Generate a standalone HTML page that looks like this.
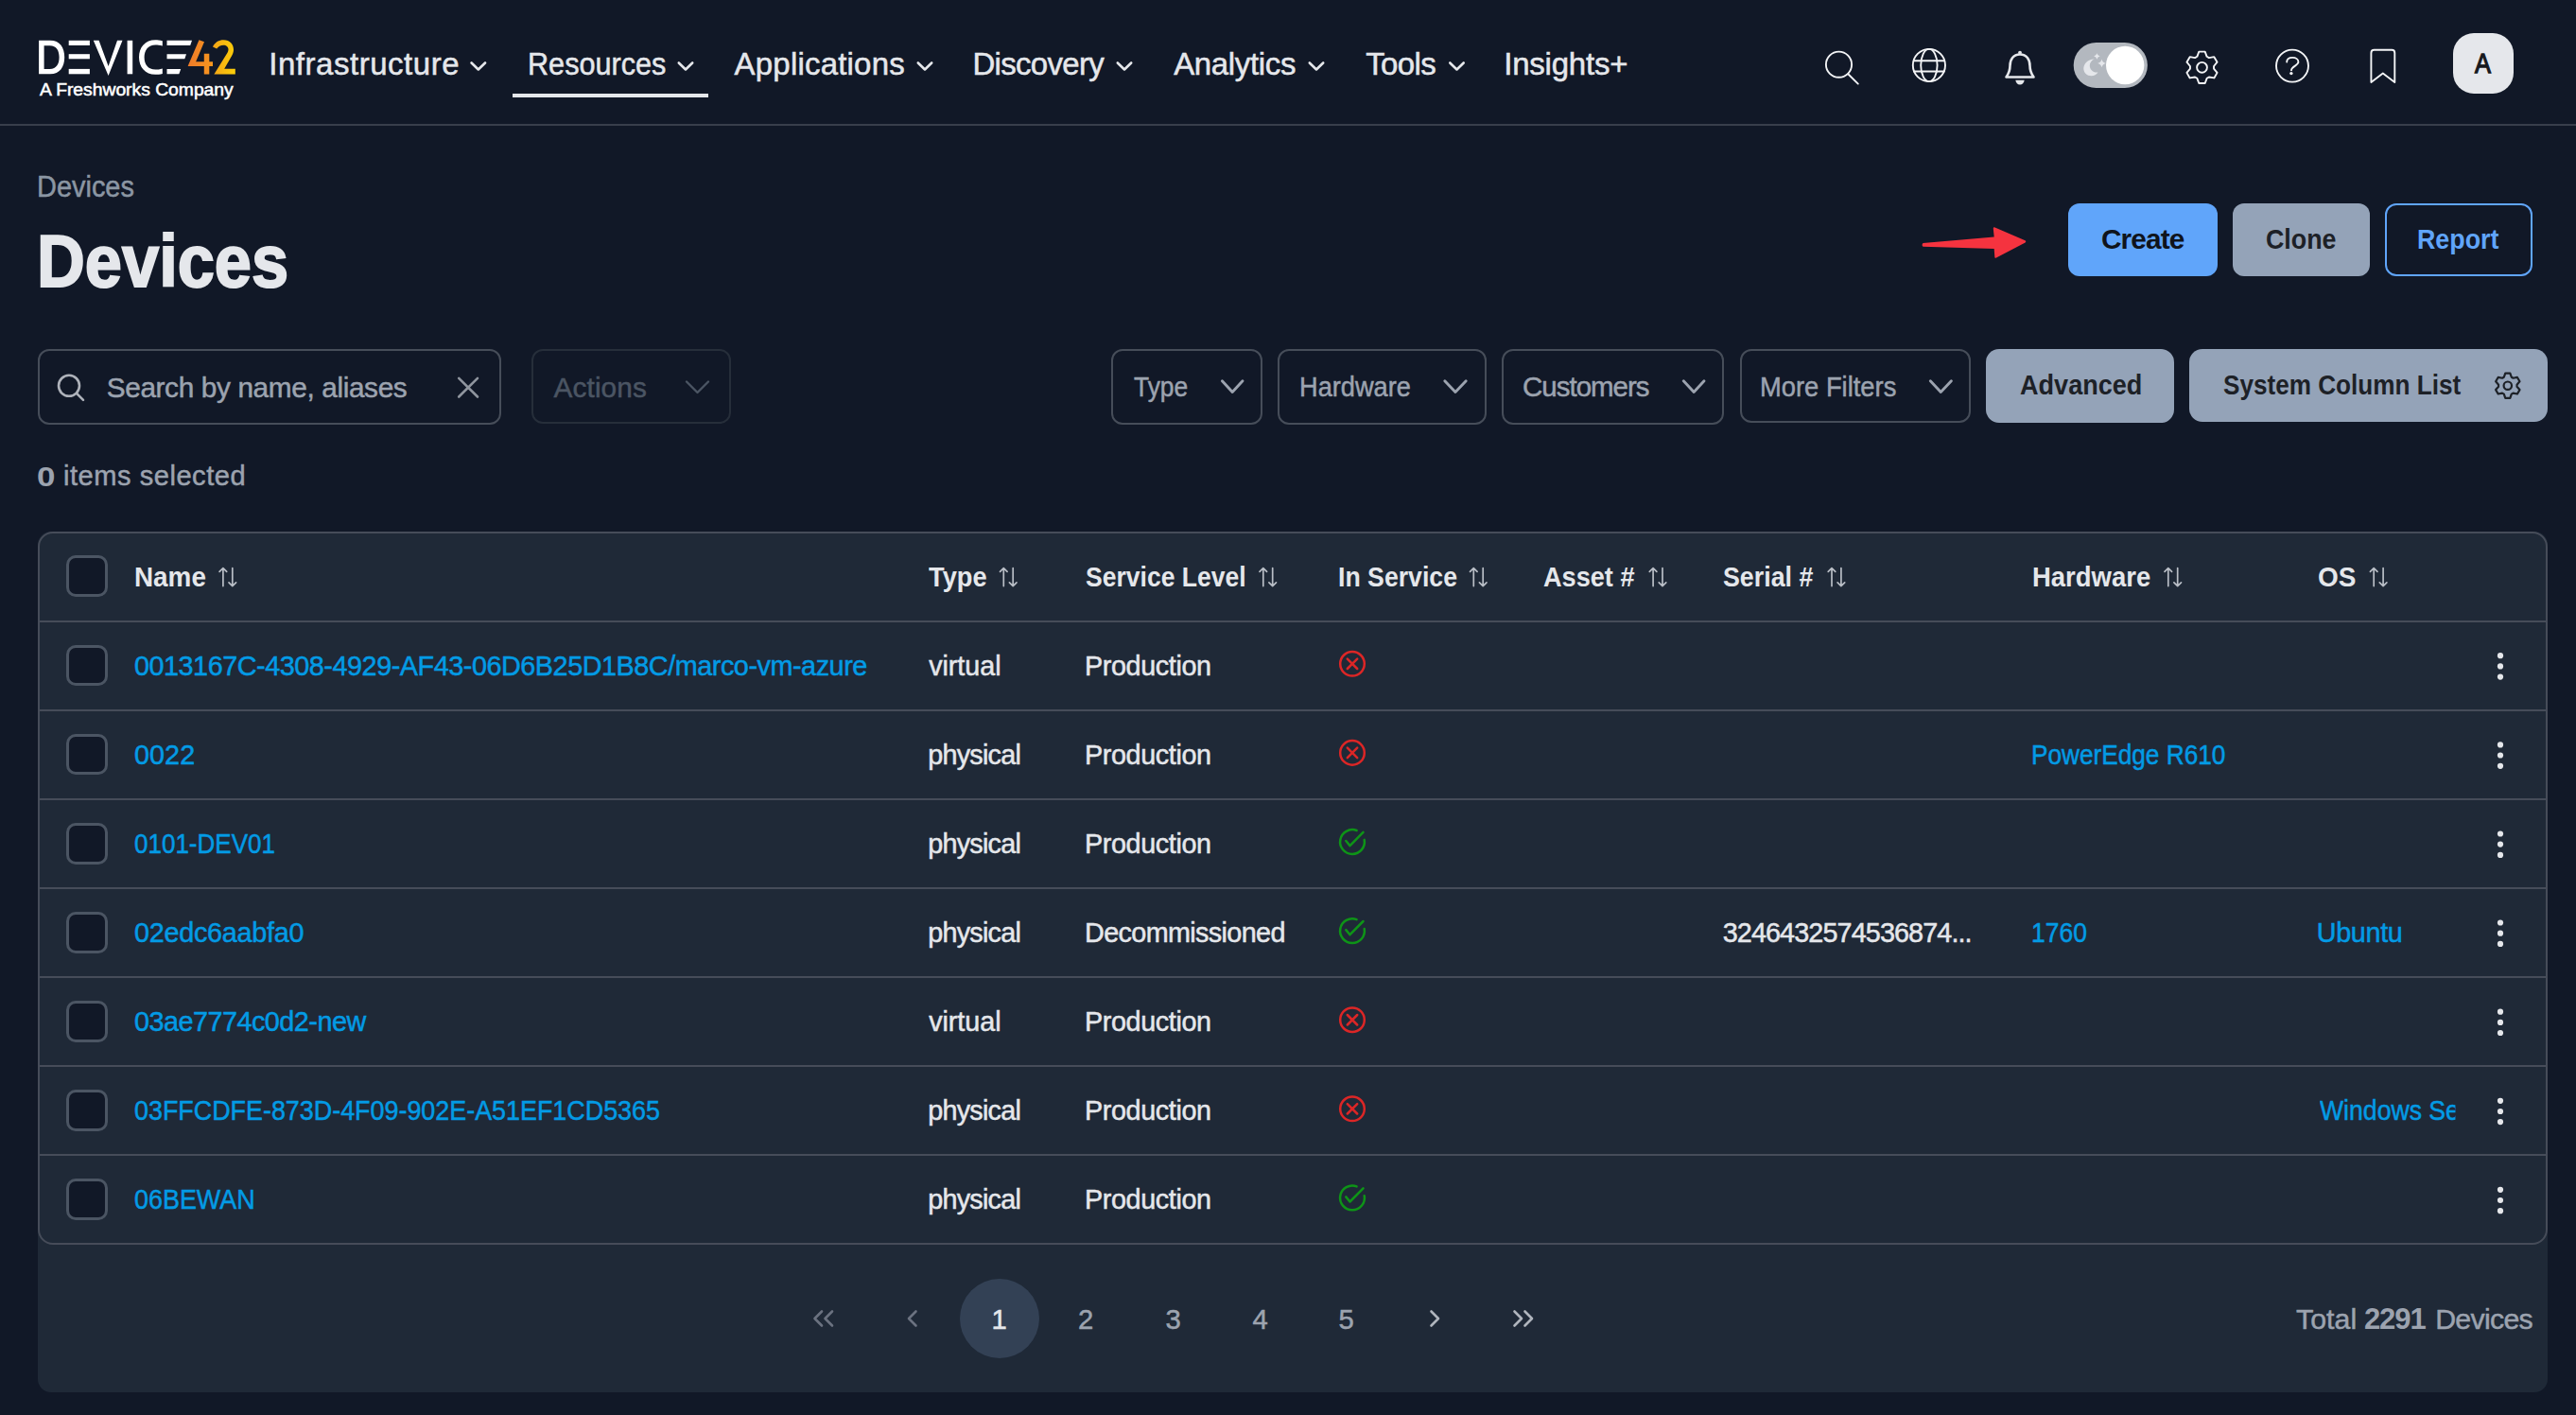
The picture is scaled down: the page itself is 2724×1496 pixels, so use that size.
<!DOCTYPE html>
<html><head><meta charset="utf-8"><title>Devices</title>
<style>
html,body{margin:0;padding:0;}
body{width:2724px;height:1496px;background:#111827;position:relative;overflow:hidden;font-family:"Liberation Sans",sans-serif;}
.t{position:absolute;white-space:nowrap;line-height:1;transform-origin:0 0;}
@media (max-width:2000px){html{zoom:0.5;}}
</style></head><body>
<div style="position:absolute;left:0px;top:131px;width:2724px;height:2px;background:#383e4b;"></div>
<svg style="position:absolute;left:0;top:0" width="300" height="130" viewBox="0 0 300 130">
<defs><linearGradient id="lg42" gradientUnits="userSpaceOnUse" x1="198" y1="0" x2="250" y2="0"><stop offset="0" stop-color="#ee7a2a"/><stop offset="0.5" stop-color="#f7951e"/><stop offset="0.56" stop-color="#f5a816"/><stop offset="1" stop-color="#fcd108"/></linearGradient></defs>
<g fill="#ffffff">
<path d="M41.1,42.8 H53 C63.5,42.8 68.2,50.5 68.2,60.5 C68.2,70.5 63.5,78.3 53,78.3 H41.1 Z M46.6,48.2 V72.9 H52.6 C59.8,72.9 62.6,67.5 62.6,60.5 C62.6,53.5 59.8,48.2 52.6,48.2 Z"/>
<rect x="72.7" y="42.8" width="22.2" height="5.2"/><rect x="72.7" y="57.2" width="22.2" height="5.1"/><rect x="72.7" y="72.9" width="22.2" height="5.4"/>
<path d="M98.8,42.8 H104.6 L114.6,70 L124,42.8 H129.5 L114.6,80 Z"/>
<rect x="134.6" y="42.8" width="5.6" height="35.5"/>
<path d="M171.8,48.5 C169,47.5 166.5,47.4 164.5,47.4 C156.5,47.4 152.6,53 152.6,60.5 C152.6,68 156.5,73.6 164.5,73.6 C166.5,73.6 169,73.5 171.8,72.5 V78 C169,78.7 166.5,78.8 164.3,78.8 C153.5,78.8 147,71 147,60.5 C147,50 153.5,42.3 164.3,42.3 C166.5,42.3 169,42.4 171.8,43.2 Z"/>
<path d="M176.5,42.8 H203 L201.2,48 H176.5 Z"/><path d="M176.5,57.2 H197 L195.3,62.3 H176.5 Z"/><path d="M176.5,72.9 H191.2 L189.3,78.3 H176.5 Z"/>
</g>
<g fill="url(#lg42)">
<path d="M210.5,42.2 L216,44.3 L207.1,65.3 H215.8 V56.8 H221.3 V65.3 H225 V70.1 H221.3 V78.6 H215.8 V70.1 H198.8 V69.4 Z"/>
<path d="M225,49.4 C227,44.8 231.5,42.2 236.5,42.2 C243,42.2 247,46.8 247,52.5 C247,55 246.2,57 245.1,59 L237.2,72.7 H248.8 V78.4 H226.4 L240.5,55.8 C241.2,54.6 241.5,53.5 241.5,52.3 C241.5,49.5 239.3,47.7 236.3,47.7 C233.3,47.7 230.8,49.3 229.2,51.5 Z"/>
</g></svg>
<div style="position:absolute;left:542px;top:99px;width:207px;height:4px;background:#e5e7eb;"></div>
<svg style="position:absolute;left:0;top:0" width="2724" height="140"><g fill="none" stroke="#e5e7eb" stroke-width="2.6" stroke-linecap="round" stroke-linejoin="round"><path d="M498.6,66.5 L505.8,73.5 L513.0,66.5"/><path d="M717.8,66.5 L725.0,73.5 L732.2,66.5"/><path d="M970.8,66.5 L978.0,73.5 L985.2,66.5"/><path d="M1181.8,66.5 L1189.0,73.5 L1196.2,66.5"/><path d="M1384.8,66.5 L1392.0,73.5 L1399.2,66.5"/><path d="M1533.3,66.5 L1540.5,73.5 L1547.7,66.5"/></g><g fill="none" stroke="#f3f4f6" stroke-width="1.9" stroke-linecap="round" stroke-linejoin="round"><circle cx="1944.5" cy="68.2" r="13.6"/><path d="M1954.3,78.3 L1964.8,88.6"/><circle cx="2039.9" cy="69" r="17.1"/><ellipse cx="2039.9" cy="69" rx="8.7" ry="17.1"/><path d="M2024,64.2 H2055.8 M2024,75.5 H2055.8"/></g><g fill="none" stroke="#e5e7eb" stroke-width="2.6" stroke-linejoin="round" stroke-linecap="round"><path d="M2136,57.5 C2129,57.5 2125.5,63 2125.5,69.5 C2125.5,74.5 2124,78 2121.5,81.5 H2150.5 C2148,78 2146.5,74.5 2146.5,69.5 C2146.5,63 2143,57.5 2136,57.5 Z"/></g><g fill="#e5e7eb"><circle cx="2136" cy="55.6" r="1.9"/><path d="M2131.3,84.7 H2140.7 C2140.2,87.8 2138.5,89.5 2136,89.5 C2133.5,89.5 2131.8,87.8 2131.3,84.7 Z"/></g><rect x="2192.7" y="45" width="78.2" height="48" rx="24" fill="#b3b8bf"/><circle cx="2247.2" cy="69" r="20.2" fill="#ffffff"/><path d="M2214.5,62.5 C2207.5,63 2203.3,67.5 2203.3,72.5 C2203.3,77 2207,80.2 2211.5,80.2 C2214.5,80.2 2217,78.8 2218.5,76.5 C2213,77 2209.8,73.2 2209.8,69.2 C2209.8,66.5 2211.5,64 2214.5,62.5 Z" fill="#e5e7eb"/><path d="M2217.4,56.3 Q2217.976,58.924 2220.6,59.5 Q2217.976,60.076 2217.4,62.7 Q2216.824,60.076 2214.2000000000003,59.5 Q2216.824,58.924 2217.4,56.3 Z" fill="#e5e7eb"/><path d="M2222.5,62.50000000000001 Q2223.292,66.108 2226.9,66.9 Q2223.292,67.69200000000001 2222.5,71.30000000000001 Q2221.708,67.69200000000001 2218.1,66.9 Q2221.708,66.108 2222.5,62.50000000000001 Z" fill="#e5e7eb"/><g fill="none" stroke="#f3f4f6" stroke-width="1.9" stroke-linejoin="round"><path d="M2323.36,59.80 L2325.29,54.61 L2331.71,54.61 L2333.64,59.80 L2335.89,61.10 L2341.35,60.17 L2344.56,65.73 L2341.03,70.00 L2341.03,72.60 L2344.56,76.87 L2341.35,82.43 L2335.89,81.50 L2333.64,82.80 L2331.71,87.99 L2325.29,87.99 L2323.36,82.80 L2321.11,81.50 L2315.65,82.43 L2312.44,76.87 L2315.97,72.60 L2315.97,70.00 L2312.44,65.73 L2315.65,60.17 L2321.11,61.10Z"/><circle cx="2328.5" cy="71.3" r="5.4"/></g><g fill="none" stroke="#f3f4f6" stroke-width="1.9" stroke-linecap="round"><circle cx="2424" cy="69.6" r="17"/><path d="M2418.2,65.6 C2418.2,62.4 2420.8,60.9 2424.2,60.9 C2427.8,60.9 2430.4,62.7 2430.4,65.6 C2430.4,69.2 2423.3,70 2423,74.2"/></g><circle cx="2422.9" cy="77.6" r="1.7" fill="#f3f4f6"/><path d="M2507.4,87 V56 C2507.4,54 2508.6,52.8 2510.6,52.8 H2529.2 C2531.2,52.8 2532.3,54 2532.3,56 V87 L2519.8,77.5 Z" fill="none" stroke="#f3f4f6" stroke-width="1.9" stroke-linejoin="round"/></svg>
<div style="position:absolute;left:2594px;top:35px;width:64px;height:64px;background:#e5e7eb;border-radius:22px;"></div>
<svg style="position:absolute;left:2020px;top:230px" width="140" height="60" viewBox="2020 230 140 60"><path d="M2033.5,257 L2108.7,250.5 L2107.8,241.8 Q2107.7,239.8 2109.6,240.6 L2141.5,254.2 Q2143,255.3 2141.6,256.4 L2111,272.6 Q2109.2,273.4 2109.3,271.5 L2108.7,262.9 L2033.5,260.7 Q2031.7,258.9 2033.5,257 Z" fill="#f5333f"/></svg>
<div style="position:absolute;left:2186.6px;top:215px;width:158.0999999999999px;height:76.69999999999999px;background:#60a5fa;border-radius:12px;"></div>
<div style="position:absolute;left:2361px;top:215px;width:144.69999999999982px;height:76.69999999999999px;background:#94a3b8;border-radius:12px;"></div>
<div style="position:absolute;left:2521.7px;top:215px;width:156.30000000000018px;height:76.69999999999999px;border:2px solid #60a5fa;border-radius:12px;box-sizing:border-box;"></div>
<div style="position:absolute;left:40.4px;top:369px;width:490.1px;height:80px;border:2px solid #464d59;border-radius:12px;box-sizing:border-box;"></div>
<div style="position:absolute;left:562px;top:369px;width:210.70000000000005px;height:79px;border:2px solid #262e3a;border-radius:12px;box-sizing:border-box;"></div>
<div style="position:absolute;left:1175px;top:369.3px;width:160.4000000000001px;height:79.69999999999999px;border:2px solid #464d59;border-radius:12px;box-sizing:border-box;"></div>
<div style="position:absolute;left:1351px;top:369.3px;width:220.5999999999999px;height:79.69999999999999px;border:2px solid #464d59;border-radius:12px;box-sizing:border-box;"></div>
<div style="position:absolute;left:1587.7px;top:369.3px;width:235.70000000000005px;height:79.69999999999999px;border:2px solid #464d59;border-radius:12px;box-sizing:border-box;"></div>
<div style="position:absolute;left:1839.6px;top:369.3px;width:244.80000000000018px;height:77.69999999999999px;border:2px solid #464d59;border-radius:12px;box-sizing:border-box;"></div>
<div style="position:absolute;left:2100px;top:368.75px;width:199px;height:78.0px;background:#94a3b8;border-radius:14px;"></div>
<div style="position:absolute;left:2315px;top:369px;width:378.75px;height:76.75px;background:#94a3b8;border-radius:14px;"></div>
<svg style="position:absolute;left:0;top:340px" width="2724" height="130" viewBox="0 340 2724 130"><g fill="none" stroke="#aeb2ba" stroke-width="2.6" stroke-linecap="round"><circle cx="73" cy="407.8" r="11"/><path d="M81,415.8 L88,422.8"/></g><path d="M485.2,399.8 L505,419.5 M505,399.8 L485.2,419.5" fill="none" stroke="#8f959e" stroke-width="2.6" stroke-linecap="round"/><g fill="none" stroke="#4b5563" stroke-width="2.4" stroke-linecap="round" stroke-linejoin="round"><path d="M726,403.5 L737.5,415 L749,403.5"/></g><g fill="none" stroke="#9ca3af" stroke-width="2.9" stroke-linecap="round" stroke-linejoin="round"><path d="M1292.4,402.8 L1303.2,414.5 L1314.0,402.8"/><path d="M1527.8,402.8 L1539.0,414.5 L1550.2,402.8"/><path d="M1780.3,402.8 L1791.2,414.5 L1802.0,402.8"/><path d="M2041.3,402.8 L2052.3,414.5 L2063.4,402.8"/></g><g fill="none" stroke="#1d2127" stroke-width="2.2" stroke-linejoin="round"><path d="M2647.80,398.75 L2649.27,394.54 L2654.33,394.54 L2655.80,398.75 L2657.55,399.77 L2661.93,398.93 L2664.46,403.31 L2661.55,406.69 L2661.55,408.71 L2664.46,412.09 L2661.93,416.47 L2657.55,415.63 L2655.80,416.65 L2654.33,420.86 L2649.27,420.86 L2647.80,416.65 L2646.05,415.63 L2641.67,416.47 L2639.14,412.09 L2642.05,408.71 L2642.05,406.69 L2639.14,403.31 L2641.67,398.93 L2646.05,399.77Z"/><circle cx="2651.8" cy="407.7" r="4.2"/></g></svg>
<div style="position:absolute;left:40px;top:562px;width:2653.5px;height:909.5px;background:#1f2937;border-radius:14px;"></div>
<div style="position:absolute;left:40px;top:562px;width:2653.5px;height:753.5px;border:2px solid #464c59;border-radius:16px;box-sizing:border-box;"></div>
<div style="position:absolute;left:42px;top:655.5px;width:2649.5px;height:2.0px;background:#464c59;"></div>
<div style="position:absolute;left:42px;top:749.6px;width:2649.5px;height:2.0px;background:#464c59;"></div>
<div style="position:absolute;left:42px;top:843.7px;width:2649.5px;height:2.0px;background:#464c59;"></div>
<div style="position:absolute;left:42px;top:937.8px;width:2649.5px;height:2.0px;background:#464c59;"></div>
<div style="position:absolute;left:42px;top:1031.9px;width:2649.5px;height:2.0px;background:#464c59;"></div>
<div style="position:absolute;left:42px;top:1126.0px;width:2649.5px;height:2.0px;background:#464c59;"></div>
<div style="position:absolute;left:42px;top:1220.1px;width:2649.5px;height:2.0px;background:#464c59;"></div>
<div style="position:absolute;left:69.9px;top:587.4px;width:43.69999999999999px;height:43.80000000000007px;background:#111827;border:3px solid #4b5563;border-radius:10px;box-sizing:border-box;"></div>
<div style="position:absolute;left:69.9px;top:681.6px;width:43.69999999999999px;height:43.799999999999955px;background:#111827;border:3px solid #4b5563;border-radius:10px;box-sizing:border-box;"></div>
<div style="position:absolute;left:69.9px;top:775.8px;width:43.69999999999999px;height:43.700000000000045px;background:#111827;border:3px solid #4b5563;border-radius:10px;box-sizing:border-box;"></div>
<div style="position:absolute;left:69.9px;top:869.9px;width:43.69999999999999px;height:43.700000000000045px;background:#111827;border:3px solid #4b5563;border-radius:10px;box-sizing:border-box;"></div>
<div style="position:absolute;left:69.9px;top:963.9px;width:43.69999999999999px;height:43.80000000000007px;background:#111827;border:3px solid #4b5563;border-radius:10px;box-sizing:border-box;"></div>
<div style="position:absolute;left:69.9px;top:1058.0px;width:43.69999999999999px;height:43.90000000000009px;background:#111827;border:3px solid #4b5563;border-radius:10px;box-sizing:border-box;"></div>
<div style="position:absolute;left:69.9px;top:1152.1px;width:43.69999999999999px;height:43.90000000000009px;background:#111827;border:3px solid #4b5563;border-radius:10px;box-sizing:border-box;"></div>
<div style="position:absolute;left:69.9px;top:1246.2px;width:43.69999999999999px;height:43.799999999999955px;background:#111827;border:3px solid #4b5563;border-radius:10px;box-sizing:border-box;"></div>
<svg style="position:absolute;left:0;top:0" width="2724" height="1496"><g fill="none" stroke="#b9bec6" stroke-width="1.7" stroke-linecap="round" stroke-linejoin="round"><path d="M235.9,619.6 V600.6 M232.1,604.4 L235.9,600.6 L239.7,604.4 M245.8,600.6 V619.6 M242.0,615.8 L245.8,619.6 L249.6,615.8"/><path d="M1061.3,619.6 V600.6 M1057.5,604.4 L1061.3,600.6 L1065.1,604.4 M1071.2,600.6 V619.6 M1067.4,615.8 L1071.2,619.6 L1075.0,615.8"/><path d="M1335.8,619.6 V600.6 M1332.0,604.4 L1335.8,600.6 L1339.6,604.4 M1345.7,600.6 V619.6 M1341.9,615.8 L1345.7,619.6 L1349.5,615.8"/><path d="M1558.3,619.6 V600.6 M1554.5,604.4 L1558.3,600.6 L1562.1,604.4 M1568.2,600.6 V619.6 M1564.4,615.8 L1568.2,619.6 L1572.0,615.8"/><path d="M1748.1,619.6 V600.6 M1744.3,604.4 L1748.1,600.6 L1751.9,604.4 M1758.0,600.6 V619.6 M1754.2,615.8 L1758.0,619.6 L1761.8,615.8"/><path d="M1937.0,619.6 V600.6 M1933.2,604.4 L1937.0,600.6 L1940.8,604.4 M1946.9,600.6 V619.6 M1943.1,615.8 L1946.9,619.6 L1950.7,615.8"/><path d="M2292.8,619.6 V600.6 M2289.0,604.4 L2292.8,600.6 L2296.6,604.4 M2302.7,600.6 V619.6 M2298.9,615.8 L2302.7,619.6 L2306.5,615.8"/><path d="M2510.2,619.6 V600.6 M2506.4,604.4 L2510.2,600.6 L2514.0,604.4 M2520.1,600.6 V619.6 M2516.3,615.8 L2520.1,619.6 L2523.9,615.8"/></g><g fill="none" stroke="#dc2626" stroke-width="2.5" stroke-linecap="round"><circle cx="1430" cy="701.8" r="12.8"/><path d="M1424.8,696.6 L1435.2,707.0 M1435.2,696.6 L1424.8,707.0"/></g><g fill="#e5e7eb"><circle cx="2644" cy="693.2" r="3.1"/><circle cx="2644" cy="704.4" r="3.1"/><circle cx="2644" cy="715.6" r="3.1"/></g><g fill="none" stroke="#dc2626" stroke-width="2.5" stroke-linecap="round"><circle cx="1430" cy="795.9" r="12.8"/><path d="M1424.8,790.7 L1435.2,801.1 M1435.2,790.7 L1424.8,801.1"/></g><g fill="#e5e7eb"><circle cx="2644" cy="787.4" r="3.1"/><circle cx="2644" cy="798.5" r="3.1"/><circle cx="2644" cy="809.8" r="3.1"/></g><g fill="none" stroke="#0e9417" stroke-width="2.5" stroke-linecap="round" stroke-linejoin="round"><path d="M1434.57,877.99 A12.9,12.9 0 1 0 1442.71,887.86"/><path d="M1423.3,889.0 L1427.5,894.1 L1441.5,879.9"/></g><g fill="#e5e7eb"><circle cx="2644" cy="881.5" r="3.1"/><circle cx="2644" cy="892.6" r="3.1"/><circle cx="2644" cy="903.9" r="3.1"/></g><g fill="none" stroke="#0e9417" stroke-width="2.5" stroke-linecap="round" stroke-linejoin="round"><path d="M1434.57,972.09 A12.9,12.9 0 1 0 1442.71,981.96"/><path d="M1423.3,983.1 L1427.5,988.2 L1441.5,974.0"/></g><g fill="#e5e7eb"><circle cx="2644" cy="975.5" r="3.1"/><circle cx="2644" cy="986.7" r="3.1"/><circle cx="2644" cy="997.9" r="3.1"/></g><g fill="none" stroke="#dc2626" stroke-width="2.5" stroke-linecap="round"><circle cx="1430" cy="1078.2" r="12.8"/><path d="M1424.8,1073.0 L1435.2,1083.5 M1435.2,1073.0 L1424.8,1083.5"/></g><g fill="#e5e7eb"><circle cx="2644" cy="1069.7" r="3.1"/><circle cx="2644" cy="1080.9" r="3.1"/><circle cx="2644" cy="1092.0" r="3.1"/></g><g fill="none" stroke="#dc2626" stroke-width="2.5" stroke-linecap="round"><circle cx="1430" cy="1172.3" r="12.8"/><path d="M1424.8,1167.1 L1435.2,1177.5 M1435.2,1167.1 L1424.8,1177.5"/></g><g fill="#e5e7eb"><circle cx="2644" cy="1163.8" r="3.1"/><circle cx="2644" cy="1175.0" r="3.1"/><circle cx="2644" cy="1186.1" r="3.1"/></g><g fill="none" stroke="#0e9417" stroke-width="2.5" stroke-linecap="round" stroke-linejoin="round"><path d="M1434.57,1254.39 A12.9,12.9 0 1 0 1442.71,1264.26"/><path d="M1423.3,1265.4 L1427.5,1270.5 L1441.5,1256.3"/></g><g fill="#e5e7eb"><circle cx="2644" cy="1257.8" r="3.1"/><circle cx="2644" cy="1269.0" r="3.1"/><circle cx="2644" cy="1280.2" r="3.1"/></g><circle cx="1057" cy="1394" r="42" fill="#334155"/><g fill="none" stroke-width="2.6" stroke-linecap="round" stroke-linejoin="round"><path stroke="#6b7280" d="M869,1386.5 L861.5,1394 L869,1401.5 M880,1386.5 L872.5,1394 L880,1401.5"/><path stroke="#6b7280" d="M968.5,1386.5 L961,1394 L968.5,1401.5"/><path stroke="#b0b5bd" d="M1513.5,1386.5 L1521,1394 L1513.5,1401.5"/><path stroke="#b0b5bd" d="M1601.5,1386.5 L1609,1394 L1601.5,1401.5 M1612.5,1386.5 L1620,1394 L1612.5,1401.5"/></g></svg>
<div class="t" style="left:284.2px;top:52.0px;font-size:32.97px;color:#e5e7eb;-webkit-text-stroke:0.5px #e5e7eb;letter-spacing:0.55px;">Infrastructure</div>
<div class="t" style="left:557.9px;top:52.0px;font-size:32.97px;color:#e5e7eb;-webkit-text-stroke:0.5px #e5e7eb;transform:scaleX(0.9284);">Resources</div>
<div class="t" style="left:776.6px;top:52.0px;font-size:32.97px;color:#e5e7eb;-webkit-text-stroke:0.5px #e5e7eb;letter-spacing:0.21px;">Applications</div>
<div class="t" style="left:1028.5px;top:52.0px;font-size:32.97px;color:#e5e7eb;-webkit-text-stroke:0.5px #e5e7eb;letter-spacing:-0.69px;">Discovery</div>
<div class="t" style="left:1241.2px;top:52.0px;font-size:32.97px;color:#e5e7eb;-webkit-text-stroke:0.5px #e5e7eb;letter-spacing:-0.33px;">Analytics</div>
<div class="t" style="left:1444.2px;top:52.0px;font-size:32.97px;color:#e5e7eb;-webkit-text-stroke:0.5px #e5e7eb;letter-spacing:-0.60px;">Tools</div>
<div class="t" style="left:1590.2px;top:52.0px;font-size:32.97px;color:#e5e7eb;-webkit-text-stroke:0.5px #e5e7eb;letter-spacing:-0.20px;">Insights+</div>
<div class="t" style="left:41.9px;top:86.7px;font-size:17.77px;color:#ffffff;-webkit-text-stroke:0.5px #ffffff;transform:scaleX(1.0855);">A Freshworks Company</div>
<div class="t" style="left:2617.2px;top:52.3px;font-size:30.11px;color:#16181c;-webkit-text-stroke:1.3px #16181c;transform:scaleX(0.8429);">A</div>
<div class="t" style="left:39.2px;top:182.0px;font-size:31.27px;color:#8b96a3;-webkit-text-stroke:0.5px #8b96a3;transform:scaleX(0.9257);">Devices</div>
<div class="t" style="left:39.4px;top:238.1px;font-size:77.09px;color:#e5e7eb;font-weight:700;-webkit-text-stroke:2px #e5e7eb;transform:scaleX(0.9134);">Devices</div>
<div class="t" style="left:2222.0px;top:238.0px;font-size:29.8px;color:#0f141c;font-weight:700;letter-spacing:-0.90px;">Create</div>
<div class="t" style="left:2396.0px;top:238.0px;font-size:29.8px;color:#1d2127;font-weight:700;transform:scaleX(0.9003);">Clone</div>
<div class="t" style="left:2556.0px;top:238.0px;font-size:29.8px;color:#60a5fa;font-weight:700;transform:scaleX(0.9002);">Report</div>
<div class="t" style="left:112.7px;top:395.3px;font-size:29.77px;color:#9ca3af;-webkit-text-stroke:0.5px #9ca3af;letter-spacing:-0.36px;">Search by name, aliases</div>
<div class="t" style="left:585.6px;top:395.3px;font-size:29.77px;color:#4b5563;-webkit-text-stroke:0.5px #4b5563;letter-spacing:0.10px;">Actions</div>
<div class="t" style="left:39.2px;top:488.8px;font-size:29.8px;color:#9ca3af;font-weight:700;transform:scaleX(1.1733);">0</div>
<div class="t" style="left:67.0px;top:489.1px;font-size:29.07px;color:#9ca3af;-webkit-text-stroke:0.5px #9ca3af;letter-spacing:0.53px;">items selected</div>
<div class="t" style="left:1198.5px;top:394.1px;font-size:29.47px;color:#9ca3af;-webkit-text-stroke:0.5px #9ca3af;transform:scaleX(0.8945);">Type</div>
<div class="t" style="left:1373.7px;top:394.1px;font-size:29.47px;color:#9ca3af;-webkit-text-stroke:0.5px #9ca3af;transform:scaleX(0.9222);">Hardware</div>
<div class="t" style="left:1610.0px;top:394.1px;font-size:29.47px;color:#9ca3af;-webkit-text-stroke:0.5px #9ca3af;letter-spacing:-0.99px;">Customers</div>
<div class="t" style="left:1861.0px;top:394.1px;font-size:29.47px;color:#9ca3af;-webkit-text-stroke:0.5px #9ca3af;transform:scaleX(0.9279);">More Filters</div>
<div class="t" style="left:2135.5px;top:393.0px;font-size:29px;color:#1d2127;font-weight:700;transform:scaleX(0.9333);">Advanced</div>
<div class="t" style="left:2350.5px;top:393.0px;font-size:29px;color:#1d2127;font-weight:700;transform:scaleX(0.9011);">System Column List</div>
<div class="t" style="left:141.7px;top:594.6px;font-size:30px;color:#e5e7eb;font-weight:700;transform:scaleX(0.9288);">Name</div>
<div class="t" style="left:982.0px;top:594.6px;font-size:30px;color:#e5e7eb;font-weight:700;transform:scaleX(0.9090);">Type</div>
<div class="t" style="left:1148.0px;top:594.6px;font-size:30px;color:#e5e7eb;font-weight:700;transform:scaleX(0.8846);">Service Level</div>
<div class="t" style="left:1414.6px;top:594.6px;font-size:30px;color:#e5e7eb;font-weight:700;transform:scaleX(0.8888);">In Service</div>
<div class="t" style="left:1632.0px;top:594.6px;font-size:30px;color:#e5e7eb;font-weight:700;transform:scaleX(0.9043);">Asset #</div>
<div class="t" style="left:1822.0px;top:594.6px;font-size:30px;color:#e5e7eb;font-weight:700;transform:scaleX(0.8930);">Serial #</div>
<div class="t" style="left:2149.0px;top:594.6px;font-size:30px;color:#e5e7eb;font-weight:700;transform:scaleX(0.9154);">Hardware</div>
<div class="t" style="left:2451.1px;top:594.6px;font-size:30px;color:#e5e7eb;font-weight:700;transform:scaleX(0.9314);">OS</div>
<div class="t" style="left:141.9px;top:689.7px;font-size:28.77px;color:#039be5;-webkit-text-stroke:0.5px #039be5;letter-spacing:-0.45px;">0013167C-4308-4929-AF43-06D6B25D1B8C/marco-vm-azure</div>
<div class="t" style="left:982.2px;top:689.7px;font-size:28.77px;color:#e5e7eb;-webkit-text-stroke:0.5px #e5e7eb;letter-spacing:-0.06px;">virtual</div>
<div class="t" style="left:1147.0px;top:689.7px;font-size:28.77px;color:#e5e7eb;-webkit-text-stroke:0.5px #e5e7eb;letter-spacing:-0.39px;">Production</div>
<div class="t" style="left:141.9px;top:783.8px;font-size:28.77px;color:#039be5;-webkit-text-stroke:0.5px #039be5;letter-spacing:0.10px;">0022</div>
<div class="t" style="left:981.2px;top:783.8px;font-size:28.77px;color:#e5e7eb;-webkit-text-stroke:0.5px #e5e7eb;letter-spacing:-0.76px;">physical</div>
<div class="t" style="left:1147.0px;top:783.8px;font-size:28.77px;color:#e5e7eb;-webkit-text-stroke:0.5px #e5e7eb;letter-spacing:-0.39px;">Production</div>
<div class="t" style="left:142.0px;top:877.9px;font-size:28.77px;color:#039be5;-webkit-text-stroke:0.5px #039be5;transform:scaleX(0.9040);">0101-DEV01</div>
<div class="t" style="left:981.2px;top:877.9px;font-size:28.77px;color:#e5e7eb;-webkit-text-stroke:0.5px #e5e7eb;letter-spacing:-0.76px;">physical</div>
<div class="t" style="left:1147.0px;top:877.9px;font-size:28.77px;color:#e5e7eb;-webkit-text-stroke:0.5px #e5e7eb;letter-spacing:-0.39px;">Production</div>
<div class="t" style="left:141.9px;top:972.0px;font-size:28.77px;color:#039be5;-webkit-text-stroke:0.5px #039be5;letter-spacing:-0.25px;">02edc6aabfa0</div>
<div class="t" style="left:981.2px;top:972.0px;font-size:28.77px;color:#e5e7eb;-webkit-text-stroke:0.5px #e5e7eb;letter-spacing:-0.76px;">physical</div>
<div class="t" style="left:1147.0px;top:972.0px;font-size:28.77px;color:#e5e7eb;-webkit-text-stroke:0.5px #e5e7eb;letter-spacing:-0.63px;">Decommissioned</div>
<div class="t" style="left:141.9px;top:1066.1px;font-size:28.77px;color:#039be5;-webkit-text-stroke:0.5px #039be5;letter-spacing:-0.49px;">03ae7774c0d2-new</div>
<div class="t" style="left:982.2px;top:1066.1px;font-size:28.77px;color:#e5e7eb;-webkit-text-stroke:0.5px #e5e7eb;letter-spacing:-0.06px;">virtual</div>
<div class="t" style="left:1147.0px;top:1066.1px;font-size:28.77px;color:#e5e7eb;-webkit-text-stroke:0.5px #e5e7eb;letter-spacing:-0.39px;">Production</div>
<div class="t" style="left:142.0px;top:1160.2px;font-size:28.77px;color:#039be5;-webkit-text-stroke:0.5px #039be5;transform:scaleX(0.9348);">03FFCDFE-873D-4F09-902E-A51EF1CD5365</div>
<div class="t" style="left:981.2px;top:1160.2px;font-size:28.77px;color:#e5e7eb;-webkit-text-stroke:0.5px #e5e7eb;letter-spacing:-0.76px;">physical</div>
<div class="t" style="left:1147.0px;top:1160.2px;font-size:28.77px;color:#e5e7eb;-webkit-text-stroke:0.5px #e5e7eb;letter-spacing:-0.39px;">Production</div>
<div class="t" style="left:142.0px;top:1254.3px;font-size:28.77px;color:#039be5;-webkit-text-stroke:0.5px #039be5;transform:scaleX(0.9361);">06BEWAN</div>
<div class="t" style="left:981.2px;top:1254.3px;font-size:28.77px;color:#e5e7eb;-webkit-text-stroke:0.5px #e5e7eb;letter-spacing:-0.76px;">physical</div>
<div class="t" style="left:1147.0px;top:1254.3px;font-size:28.77px;color:#e5e7eb;-webkit-text-stroke:0.5px #e5e7eb;letter-spacing:-0.39px;">Production</div>
<div class="t" style="left:1821.7px;top:972.0px;font-size:28.77px;color:#e5e7eb;-webkit-text-stroke:0.5px #e5e7eb;letter-spacing:-0.89px;">3246432574536874...</div>
<div class="t" style="left:2148.1px;top:783.8px;font-size:28.77px;color:#039be5;-webkit-text-stroke:0.5px #039be5;transform:scaleX(0.9107);">PowerEdge R610</div>
<div class="t" style="left:2148.4px;top:972.0px;font-size:28.77px;color:#039be5;-webkit-text-stroke:0.5px #039be5;transform:scaleX(0.9198);">1760</div>
<div class="t" style="left:2449.8px;top:972.0px;font-size:28.77px;color:#039be5;-webkit-text-stroke:0.5px #039be5;letter-spacing:-0.35px;">Ubuntu</div>
<div class="t" style="left:2452.8px;top:1160.2px;font-size:28.77px;color:#039be5;-webkit-text-stroke:0.5px #039be5;transform:scaleX(0.9253);width:154.8px;overflow:hidden;">Windows Server 2019</div>
<div class="t" style="left:1048.5px;top:1380.6px;font-size:29.27px;color:#e5e7eb;-webkit-text-stroke:0.5px #e5e7eb;">1</div>
<div class="t" style="left:1140.0px;top:1380.6px;font-size:29.27px;color:#9ca3af;-webkit-text-stroke:0.5px #9ca3af;">2</div>
<div class="t" style="left:1232.6px;top:1380.6px;font-size:29.27px;color:#9ca3af;-webkit-text-stroke:0.5px #9ca3af;">3</div>
<div class="t" style="left:1324.5px;top:1380.6px;font-size:29.27px;color:#9ca3af;-webkit-text-stroke:0.5px #9ca3af;">4</div>
<div class="t" style="left:1415.5px;top:1380.6px;font-size:29.27px;color:#9ca3af;-webkit-text-stroke:0.5px #9ca3af;">5</div>
<div class="t" style="left:2428.1px;top:1379.5px;font-size:30.27px;color:#9ca3af;-webkit-text-stroke:0.5px #9ca3af;letter-spacing:0.02px;">Total</div>
<div class="t" style="left:2499.9px;top:1379.2px;font-size:31px;color:#9ca3af;font-weight:700;letter-spacing:-1.01px;">2291</div>
<div class="t" style="left:2575.2px;top:1379.5px;font-size:30.27px;color:#9ca3af;-webkit-text-stroke:0.5px #9ca3af;letter-spacing:-0.69px;">Devices</div>
</body></html>
